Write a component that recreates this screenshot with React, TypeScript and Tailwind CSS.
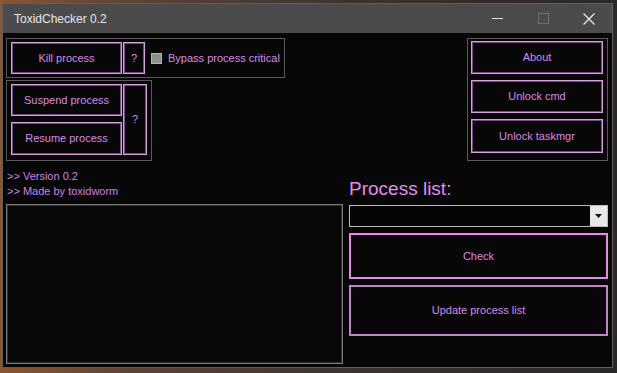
import React from "react";

const font = { fontFamily: '"Liberation Sans", Arial, sans-serif' };

function PinkButton({
  children,
  className = "",
}: {
  children?: React.ReactNode;
  className?: string;
}) {
  return (
    <div
      className={
        "flex items-center justify-center border border-[#d8a0e2] shadow-[inset_0_0_0_1px_#7a4686] bg-[#070707] text-[11px] text-[#d68ae8] " +
        className
      }
    >
      {children}
    </div>
  );
}

export default function App() {
  return (
    <div
      style={font}
      className="w-[617px] h-[373px] overflow-hidden pt-[3px] pl-[2px] bg-[linear-gradient(90deg,#8a5634_0%,#5e4438_20%,#3c3431_55%,#2a2828_100%)]"
    >
      <div className="w-[611px] h-[365px] flex flex-col border border-[#5e5e5e] bg-[#070707]">
        {/* Title bar */}
        <div className="h-[29px] shrink-0 flex items-center bg-[#4b4b4b] text-[12px] text-[#e6e6e6]">
          <span className="pl-[11px]">ToxidChecker 0.2</span>
          <div className="ml-auto flex items-center h-full">
            <div className="w-[46px] h-full flex items-center justify-center">
              <div className="w-[11px] h-[1px] bg-[#e0e0e0]" />
            </div>
            <div className="w-[46px] h-full flex items-center justify-center">
              <div className="w-[11px] h-[11px] border border-[#6e6e6e]" />
            </div>
            <div className="w-[46px] h-full flex items-center justify-center">
              <svg width="12" height="12" viewBox="0 0 12 12">
                <path d="M0.5 0.5 L11.5 11.5 M11.5 0.5 L0.5 11.5" stroke="#eeeeee" strokeWidth="1.2" />
              </svg>
            </div>
          </div>
        </div>

        {/* Client */}
        <div className="flex-1 flex flex-col bg-[#070707]">
          {/* Top section */}
          <div className="flex justify-between pl-[3px] pr-[4px] pt-[5px]">
            <div className="flex flex-col gap-[2px]">
              {/* Group 1 */}
              <div className="w-[279px] h-[40px] border border-[#5a5a5a] flex items-center pl-[4px]">
                <PinkButton className="w-[111px] h-[32px]">Kill process</PinkButton>
                <PinkButton className="w-[22px] h-[32px] ml-[1px]">?</PinkButton>
                <div className="w-[11px] h-[11px] ml-[6px] bg-[#8e8e8e] border border-[#b4b4b4]" />
                <span className="ml-[6px] text-[11px] text-[#d68ae8] whitespace-nowrap">
                  Bypass process critical
                </span>
              </div>
              {/* Group 2 */}
              <div className="w-[146px] h-[81px] border border-[#5a5a5a] flex pl-[4px] pt-[3px]">
                <div className="flex flex-col gap-[6px]">
                  <PinkButton className="w-[111px] h-[32px]">Suspend process</PinkButton>
                  <PinkButton className="w-[111px] h-[33px]">Resume process</PinkButton>
                </div>
                <PinkButton className="w-[24px] h-[71px] ml-[1px]">?</PinkButton>
              </div>
            </div>

            {/* Right group */}
            <div className="w-[141px] h-[123px] border border-[#5a5a5a] flex flex-col gap-[6px] pl-[3px] pt-[2px]">
              <PinkButton className="w-[132px] h-[33px]">About</PinkButton>
              <PinkButton className="w-[132px] h-[33px]">Unlock cmd</PinkButton>
              <PinkButton className="w-[132px] h-[34px]">Unlock taskmgr</PinkButton>
            </div>
          </div>

          {/* Bottom section */}
          <div className="flex pl-[3px] gap-[6px]">
            <div className="w-[337px] flex flex-col pt-[8px]">
              <div className="text-[11px] leading-[15px] text-[#cc80ea] pl-[1px]">&gt;&gt; Version 0.2</div>
              <div className="text-[11px] leading-[15px] text-[#cc80ea] pl-[1px]">&gt;&gt; Made by toxidworm</div>
              <div className="mt-[5px] h-[160px] border border-[#7a7a7a] shadow-[inset_0_0_0_1px_#2e2e2e] bg-[#080808]" />
            </div>
            <div className="w-[259px] flex flex-col pt-[17px]">
              <div className="text-[19px] leading-[22px] text-[#e08cf2]">Process list:</div>
              <div className="mt-[5px] h-[22px] flex border border-[#bdbdbd] bg-[#050505]">
                <div className="flex-1" />
                <div className="w-[17px] h-full bg-[#e8e8e8] flex items-center justify-center">
                  <svg width="7" height="4" viewBox="0 0 7 4">
                    <path d="M0 0 L7 0 L3.5 4 Z" fill="#111" />
                  </svg>
                </div>
              </div>
              <div className="mt-[6px] h-[46px] flex items-center justify-center border-2 border-[#e68ce8] text-[11px] text-[#d68ae8]">
                Check
              </div>
              <div className="mt-[6px] h-[51px] flex items-center justify-center border-2 border-[#c780d0] text-[11px] text-[#d68ae8]">
                Update process list
              </div>
            </div>
          </div>
        </div>
      </div>
    </div>
  );
}
